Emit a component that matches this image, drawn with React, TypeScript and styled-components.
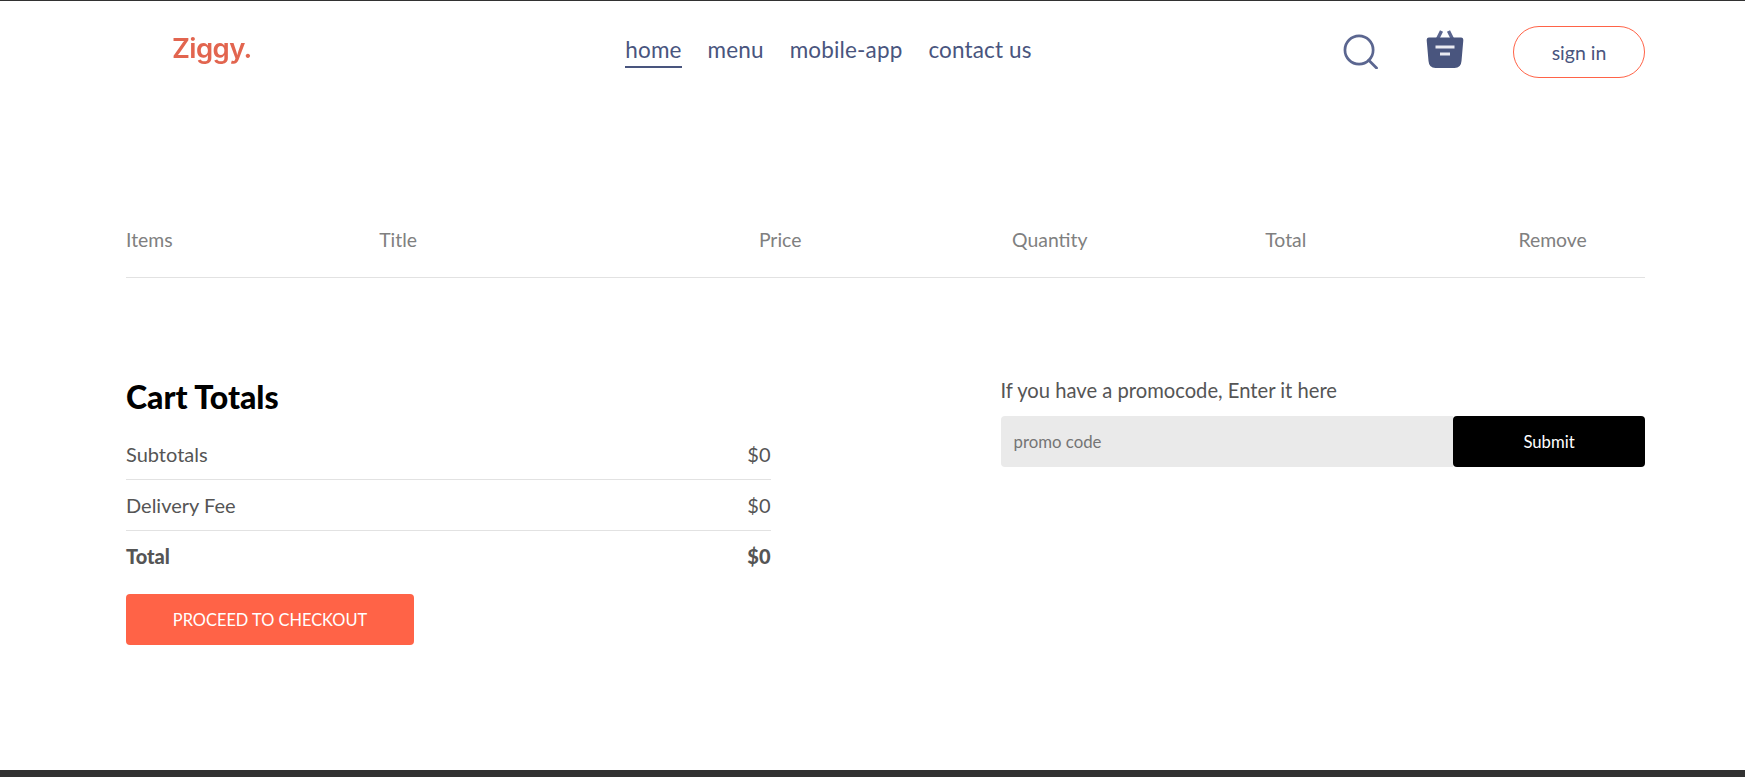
import React from 'react';
import styled, { createGlobalStyle } from 'styled-components';

const GlobalStyle = createGlobalStyle`
  html, body {
    margin: 0;
    background: #fff;
    overflow: hidden;
    font-family: Lato, "Noto Sans", sans-serif;
  }
  * { box-sizing: border-box; }
`;

const Page = styled.div`
  height: 777px;
  display: flex;
  flex-direction: column;
  border-top: 1px solid #323232;
`;

const Container = styled.div`
  width: 1519px;
  margin-left: 126px;
  flex: 1;
`;

const Navbar = styled.header`
  height: 76px;
  padding-top: 25px;
  display: flex;
  align-items: flex-start;
  justify-content: space-between;
`;

const Logo = styled.div`
  width: 130px;
  padding: 6px 0 0 46px;
  font-family: Inter, sans-serif;
  font-weight: 600;
  font-size: 27.5px;
  letter-spacing: -0.6px;
  line-height: 32px;
  color: #e2654f;
  filter: blur(0.6px);
`;

const NavLinks = styled.nav`
  display: flex;
  gap: 26px;
  margin-left: 58px;
  padding-top: 10px;
`;

const NavLink = styled.a<{ $active?: boolean }>`
  font-size: 22.5px;
  line-height: 27px;
  letter-spacing: 0.15px;
  color: #49557e;
  padding-bottom: 3px;
  border-bottom: 2px solid ${(p) => (p.$active ? '#49557e' : 'transparent')};
`;

const NavRight = styled.div`
  display: flex;
  align-items: center;
  height: 52px;
`;

const SearchIcon = styled.svg`
  width: 35px;
  height: 35px;
  margin-right: 48px;
  margin-top: -1px;
`;

const BasketIcon = styled.svg`
  width: 38px;
  height: 40px;
  margin-right: 49px;
  margin-top: -7px;
`;

const SignIn = styled.button`
  width: 132px;
  height: 52px;
  border: 1px solid #ff6347;
  border-radius: 26px;
  background: transparent;
  color: #49557e;
  font-family: inherit;
  font-size: 19.5px;
`;

const TableRow = styled.div`
  margin-top: 124px;
  height: 77px;
  display: grid;
  grid-template-columns: 1fr 1.5fr 1fr 1fr 1fr 0.5fr;
  align-items: center;
  border-bottom: 1px solid #e2e2e2;
  color: #808080;
  font-size: 19.4px;
  white-space: nowrap;
`;

const Bottom = styled.section`
  margin-top: 100px;
  display: flex;
  gap: 230px;
`;

const Totals = styled.div`
  flex: 1;
  display: flex;
  flex-direction: column;
`;

const Heading = styled.h2`
  margin: 0 0 13px;
  font-size: 32px;
  line-height: 38px;
  font-weight: 900;
  color: #000;
`;

const TotalRow = styled.div<{ $bold?: boolean }>`
  display: flex;
  justify-content: space-between;
  align-items: center;
  height: 50px;
  color: #555;
  font-size: 20px;
  font-weight: ${(p) => (p.$bold ? 900 : 400)};
`;

const Rule = styled.hr`
  width: 100%;
  margin: 0;
  border: 0;
  border-top: 1px solid #e2e2e2;
`;

const Checkout = styled.button`
  width: 288px;
  height: 51px;
  margin-top: 13px;
  border: 0;
  border-radius: 4px;
  background: #ff6347;
  color: #fff;
  font-family: inherit;
  font-size: 16.4px;
`;

const Promo = styled.div`
  flex: 1;
  display: flex;
  flex-direction: column;
`;

const PromoText = styled.p`
  margin: 0;
  font-size: 20.2px;
  line-height: 24px;
  color: #555;
`;

const PromoForm = styled.div`
  margin-top: 14px;
  display: flex;
  height: 51px;
`;

const PromoInput = styled.input`
  flex: 1;
  min-width: 0;
  border: 0;
  outline: 0;
  padding-left: 13px;
  background: #eaeaea;
  border-radius: 4px 0 0 4px;
  font-family: inherit;
  font-size: 16.8px;
  &::placeholder {
    color: #757575;
    opacity: 1;
  }
`;

const Submit = styled.button`
  width: 192px;
  border: 0;
  border-radius: 4px;
  background: #000;
  color: #fff;
  font-family: inherit;
  font-size: 16.7px;
`;

const Footer = styled.footer`
  height: 7px;
  background: #323232;
`;

const columns = ['Items', 'Title', 'Price', 'Quantity', 'Total', 'Remove'];

export default function App() {
  return (
    <Page>
      <GlobalStyle />
      <Container>
        <Navbar>
          <Logo>Ziggy.</Logo>
          <NavLinks>
            <NavLink $active>home</NavLink>
            <NavLink>menu</NavLink>
            <NavLink>mobile-app</NavLink>
            <NavLink>contact us</NavLink>
          </NavLinks>
          <NavRight>
            <SearchIcon viewBox="0 0 36 36" fill="none" stroke="#5b6690" strokeWidth="2.8">
              <circle cx="16.5" cy="16.5" r="14.5" />
              <path d="M26.5 27l8 8" strokeLinecap="round" />
            </SearchIcon>
            <BasketIcon viewBox="0 0 38 40">
              <path d="M11 11 L15.5 2 M27 11 L22.5 2" stroke="#5b6690" strokeWidth="3.4" />
              <path
                d="M3 8.5 H35 Q37.5 8.5 37.3 11.5 L35.5 32 Q35 39 28.5 39 H9.5 Q3 39 2.5 32 L0.7 11.5 Q0.5 8.5 3 8.5 Z"
                fill="#49557e"
              />
              <path d="M9.5 18 H28.5 M14 25 H24" stroke="#e9eaf1" strokeWidth="2.8" />
            </BasketIcon>
            <SignIn>sign in</SignIn>
          </NavRight>
        </Navbar>
        <TableRow>
          {columns.map((c) => (
            <span key={c}>{c}</span>
          ))}
        </TableRow>
        <Bottom>
          <Totals>
            <Heading>Cart Totals</Heading>
            <TotalRow>
              <span>Subtotals</span>
              <span>$0</span>
            </TotalRow>
            <Rule />
            <TotalRow>
              <span>Delivery Fee</span>
              <span>$0</span>
            </TotalRow>
            <Rule />
            <TotalRow $bold>
              <span>Total</span>
              <span>$0</span>
            </TotalRow>
            <Checkout>PROCEED TO CHECKOUT</Checkout>
          </Totals>
          <Promo>
            <PromoText>If you have a promocode, Enter it here</PromoText>
            <PromoForm>
              <PromoInput placeholder="promo code" />
              <Submit>Submit</Submit>
            </PromoForm>
          </Promo>
        </Bottom>
      </Container>
      <Footer />
    </Page>
  );
}
